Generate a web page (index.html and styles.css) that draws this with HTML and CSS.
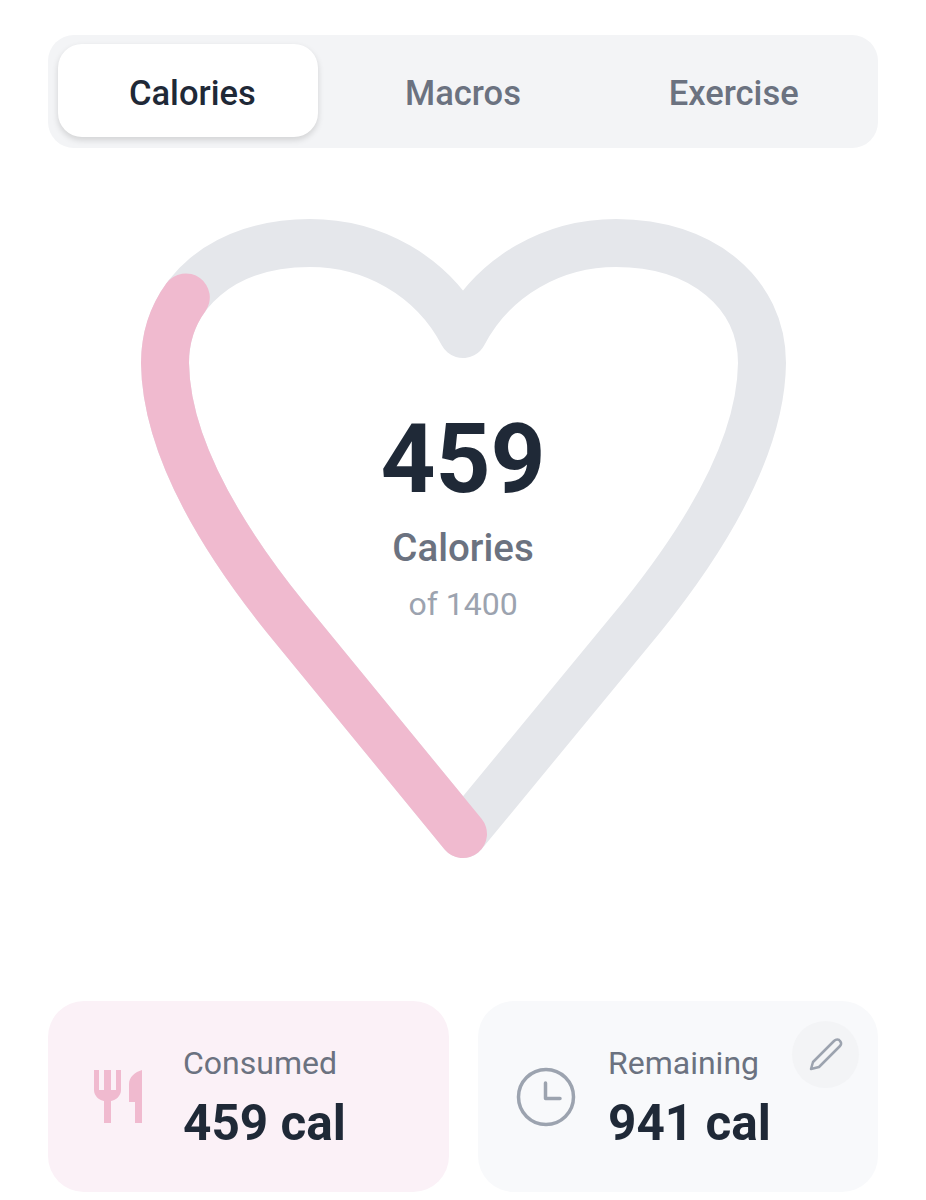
FILE: index.html
```html
<!DOCTYPE html>
<html lang="en">
<head>
    <meta charset="UTF-8">
    <meta name="viewport" content="width=device-width, initial-scale=1.0">
    <title>Calories</title>
    <link rel="stylesheet" href="styles.css">
</head>
<body>
    <div class="tabs">
        <div class="tab-indicator"></div>
        <button class="tab active">Calories</button>
        <button class="tab">Macros</button>
        <button class="tab">Exercise</button>
    </div>

    <div class="heart-wrap">
        <svg class="heart" width="830" height="660" viewBox="48 210 830 660" fill="none" stroke-width="48" stroke-linecap="round" stroke-linejoin="round">
            <path stroke="#e5e7eb" d="M463 833 L286 617 C232 550 166 452 165 362 C165 292 224 242 310 242 C372 242 432 274 463 333 C494 274 554 242 616 242 C702 242 762 292 762 362 C761 452 695 550 641 617 Z"/>
            <path stroke="#f0bacf" pathLength="1000" stroke-dasharray="660 2000" d="M463 833 L286 617 C232 550 166 452 165 362 C165 292 224 242 310 242 C372 242 432 274 463 333"/>
        </svg>
        <div class="heart-text">
            <div class="big">459</div>
            <div class="label">Calories</div>
            <div class="goal">of 1400</div>
        </div>
    </div>

    <div class="cards">
        <div class="card pink">
            <svg class="card-icon" width="48" height="53" viewBox="0 0 48 53" fill="#f0bacf">
                <path d="M0 0H5V20H10V0H17V20H22V0H27V20C27 26 22 30 17 31V53H10V31C5 30 0 26 0 20Z"/>
                <path d="M48 0V53H41V32H35V14C35 7 41 2 48 0Z"/>
            </svg>
            <div>
                <div class="card-label">Consumed</div>
                <div class="card-value">459 cal</div>
            </div>
        </div>
        <div class="card grey">
            <svg class="card-icon" width="60" height="60" viewBox="0 0 60 60" fill="none" stroke="#9ca3af" stroke-width="3.5" stroke-linecap="round" stroke-linejoin="round">
                <circle cx="30" cy="30" r="27.5"/>
                <path d="M29.5 16V31.5H44"/>
            </svg>
            <div>
                <div class="card-label">Remaining</div>
                <div class="card-value">941 cal</div>
            </div>
            <button class="edit">
                <svg width="34" height="34" viewBox="0 0 34 34" fill="none" stroke="#9ca3af" stroke-width="2.5" stroke-linecap="round" stroke-linejoin="round">
                    <path d="M2 31L4 24L25 3C27 1 30 1 31 3C33 5 32 7 31 8L10 29Z"/>
                </svg>
            </button>
        </div>
    </div>
</body>
</html>
```

FILE: styles.css
```css
* {
    box-sizing: border-box;
}
body {
    font-family: Roboto, "Liberation Sans", sans-serif;
    margin: 0;
    padding: 35px 48px 0;
    background-color: #fff;
    color: #1f2937;
}
.tabs {
    position: relative;
    display: flex;
    height: 113px;
    padding: 9px;
    background-color: #f3f4f6;
    border-radius: 26px;
}
.tab-indicator {
    position: absolute;
    top: 9px;
    left: 10px;
    width: 260px;
    height: 93px;
    background-color: #fff;
    border-radius: 24px;
    box-shadow: 0 3px 6px rgba(0, 0, 0, 0.14);
}
.tab {
    position: relative;
    flex: 1;
    padding: 2px 0 0;
    border: none;
    background: none;
    font-family: inherit;
    font-size: 34.5px;
    font-weight: 500;
    color: #6b7280;
}
.tab.active {
    color: #1f2937;
}
.heart-wrap {
    position: relative;
    height: 660px;
    margin-top: 63px;
}
.heart {
    display: block;
}
.heart-text {
    position: absolute;
    top: 192px;
    left: 0;
    right: 0;
    text-align: center;
}
.big {
    font-size: 96px;
    font-weight: 700;
    line-height: 112px;
}
.label {
    font-size: 38.5px;
    font-weight: 500;
    line-height: 42px;
    margin-top: 12px;
    color: #6b7280;
}
.goal {
    font-size: 32px;
    line-height: 38px;
    margin-top: 16px;
    color: #9ca3af;
}
.cards {
    display: grid;
    grid-template-columns: 401px 400px;
    gap: 29px;
    margin-top: 130px;
}
.card {
    position: relative;
    display: flex;
    align-items: center;
    height: 191px;
    border-radius: 36px;
}
.card.pink {
    background-color: #fbf1f7;
    padding-left: 46px;
    gap: 41px;
}
.card.grey {
    background-color: #f8f9fb;
    padding-left: 38px;
    gap: 32px;
}
.card-icon {
    flex: none;
}
.card-label {
    font-size: 32px;
    line-height: 38px;
    color: #6b7280;
}
.card-value {
    font-size: 49.5px;
    font-weight: 700;
    line-height: 54px;
    margin-top: 14px;
}
.edit {
    position: absolute;
    top: 20px;
    right: 19px;
    width: 67px;
    height: 67px;
    padding: 0;
    border: none;
    border-radius: 50%;
    background-color: #f3f4f6;
    display: flex;
    align-items: center;
    justify-content: center;
}
```
